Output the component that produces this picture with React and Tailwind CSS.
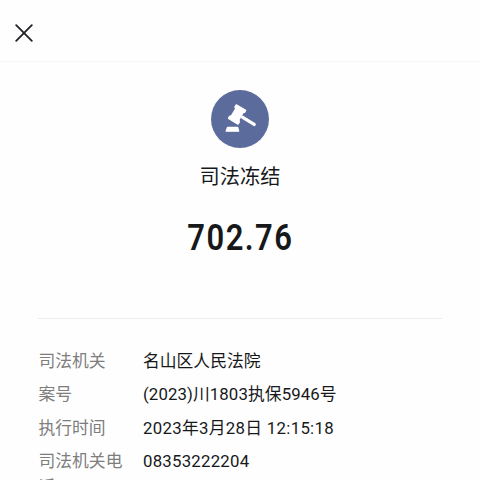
const RECORD = {
  title: "司法冻结",
  amount: "702.76",
  rows: [
    { label: "司法机关", value: "名山区人民法院", spacing: "tracking-normal" },
    { label: "案号", value: "(2023)川1803执保5946号", spacing: "tracking-[0.1px]" },
    { label: "执行时间", value: "2023年3月28日 12:15:18", spacing: "tracking-[0.3px]" },
    { label: "司法机关电话", value: "08353222204", spacing: "tracking-[0.24px]" },
  ],
};

function CloseIcon() {
  return (
    <svg className="size-[18px]" viewBox="0 0 18 18" fill="none" stroke="#202124" strokeWidth="1.8" strokeLinecap="round">
      <path d="M1.2 1.2l15.6 15.6M16.8 1.2L1.2 16.8" />
    </svg>
  );
}

function GavelBadge() {
  return (
    <svg className="size-[58px]" viewBox="35 32 172 172">
      <circle cx="121" cy="118" r="86" fill="#5b6b9b" />
      <g fill="#fff" stroke="#fff" strokeWidth="4" strokeLinejoin="round" strokeLinecap="round">
        <path d="M110 76L138 92L135 98L130 99L118 120L119 127L115 133L87 116L90 110L96 108L108 88L106 82Z" />
        <path d="M84 143H114L117 154H80Z" />
        <path d="M129 113L163 134" strokeWidth="10" />
      </g>
    </svg>
  );
}

export default function App() {
  return (
    <div className="h-[480px] w-full overflow-hidden bg-[#fefefe] font-['Roboto','Noto_Sans_CJK_SC',sans-serif] text-[#17181a]">
      <header className="flex h-[62px] items-center border-b border-[#f7f7f7] px-[15px] pt-[5px]">
        <button type="button" aria-label="关闭">
          <CloseIcon />
        </button>
      </header>

      <section className="flex flex-col items-center pt-[28px]">
        <GavelBadge />
        <h1 className="mt-[13px] text-[20.2px] leading-[32px]">{RECORD.title}</h1>
        <p className="mt-[21px] scale-x-[0.85] pl-[1px] text-[36.5px] leading-[48px] font-semibold tracking-[1.7px]">
          {RECORD.amount}
        </p>
      </section>

      <dl className="mx-[38px] mt-[56px] flex flex-col gap-[7.6px] border-t border-[#ededed] pt-[28.6px] text-[16.8px] leading-[26px]">
        {RECORD.rows.map((row) => (
          <div key={row.label} className="flex">
            <dt className="w-[105px] shrink-0 pr-4 pl-[0.5px] text-[#7d7d7d]">{row.label}</dt>
            <dd className={`whitespace-nowrap ${row.spacing}`}>{row.value}</dd>
          </div>
        ))}
      </dl>
    </div>
  );
}
